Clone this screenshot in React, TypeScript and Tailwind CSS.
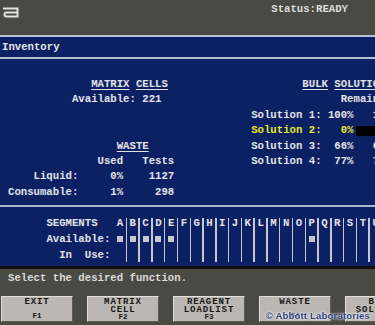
import React from "react";

const U = ({ children }: { children: React.ReactNode }) => (
  <span className="underline decoration-1 underline-offset-[2px]">{children}</span>
);

const letters = "ABCDEFGHIJKLMNOPQRSTU".split("");
const avail = new Set(["A", "B", "C", "D", "E", "P"]);

const buttons: { lines: string[]; key: string }[] = [
  { lines: ["EXIT"], key: "F1" },
  { lines: ["MATRIX", "CELL"], key: "F2" },
  { lines: ["REAGENT", "LOADLIST"], key: "F3" },
  { lines: ["WASTE"], key: "F4" },
  { lines: ["BULK", "SOLUTION"], key: "F5" },
];

function AbbottLogo() {
  return (
    <svg width="16" height="11" viewBox="0 0 16 11" className="block">
      <path
        d="M0 1.5 H14.5 V9.5 H3.5 Q1.5 9.5 1.5 7.5 Q1.5 5.5 3.5 5.5 H14.5"
        fill="none"
        stroke="#e2e2e2"
        strokeWidth="2"
      />
    </svg>
  );
}

export default function App() {
  return (
    <div className="w-[375px] h-[325px] overflow-hidden flex flex-col bg-[#4a4a44] font-['Liberation_Mono','DejaVu_Sans_Mono',monospace] font-bold text-[#e4e4e8]">
      {/* top bar */}
      <div className="h-[35px] shrink-0 flex items-start justify-between">
        <div className="pl-[3px] pt-[7px]">
          <AbbottLogo />
        </div>
        <div className="pt-[2px] mr-[27px] text-[10.667px] leading-[14px] text-[#dcdcd8]">Status:READY</div>
      </div>
      <div className="h-[2px] shrink-0 bg-[#b4c0d4]" />
      {/* Inventory band */}
      <div className="h-[20px] shrink-0 bg-[#0b2163] flex items-center pl-[2px] text-[10.667px] leading-[14px]">
        Inventory
      </div>
      <div className="h-[2px] shrink-0 bg-[#b4c0d4]" />
      {/* main */}
      <div className="h-[146px] shrink-0 bg-[#0b2163] flex pt-[18px] text-[10.667px] leading-[15.4px] whitespace-pre">
        <div className="w-[251.2px] shrink-0 pl-[8px]">
          <div>{"             "}<U>MATRIX</U> <U>CELLS</U></div>
          <div>{"          Available: 221"}</div>
          <div>{" "}</div>
          <div>{" "}</div>
          <div>{"                 "}<U>WASTE</U></div>
          <div>{"              Used   Tests"}</div>
          <div>{"    Liquid:     0%    1127"}</div>
          <div>{"Consumable:     1%     298"}</div>
        </div>
        <div className="flex-1 min-w-0">
          <div>{"        "}<U>BULK</U> <U>SOLUTIONS</U></div>
          <div>{"              Remaining"}</div>
          <div>{"Solution 1: 100%   1500"}</div>
          <div className="flex items-center">
            <span className="text-[#e8e82c]">{"Solution 2:   0%"}</span>
            <div className="flex-1 h-[10px] ml-[2px] bg-black" />
          </div>
          <div>{"Solution 3:  66%   660"}</div>
          <div>{"Solution 4:  77%   770"}</div>
        </div>
      </div>
      <div className="h-[2px] shrink-0 bg-[#a8b4cc]" />
      {/* segments */}
      <div className="h-[59px] shrink-0 bg-[#0b2163] pt-[8px] flex text-[10.667px] leading-[16px]">
        <div className="ml-[46.4px] w-[64px] shrink-0 flex flex-col whitespace-pre">
          <div>SEGMENTS</div>
          <div>Available:</div>
          <div className="text-right">{"In  Use:"}</div>
        </div>
        <div className="w-[6.4px] shrink-0" />
        {letters.map((l) => (
          <React.Fragment key={l}>
            <div className="w-[6.4px] shrink-0 flex flex-col items-center">
              <div className="h-[16px]">{l}</div>
              <div className="h-[16px] flex items-center justify-center">
                {avail.has(l) && <div className="w-[6px] h-[6px] bg-[#c8c8cc]" />}
              </div>
            </div>
            <div className="w-[6.4px] shrink-0 flex justify-center">
              <div className="w-[1.5px] h-[44px] mt-[3px] bg-[#c4c8d0]" />
            </div>
          </React.Fragment>
        ))}
      </div>
      <div className="h-[3px] shrink-0 bg-[#111114]" />
      {/* bottom */}
      <div className="relative flex-1">
        <div className="pl-[8px] pt-[1px] leading-[16px] text-[10.667px] text-[#dadad6] whitespace-pre">
          Select the desired function.
        </div>
        <div className="flex gap-[14px] pl-[1px] mt-[10px]">
          {buttons.map((b) => (
            <div
              key={b.key}
              className="w-[72px] h-[26px] shrink-0 flex flex-col items-center bg-[#bbb7b2] border border-t-[#e2dfdb] border-l-[#e2dfdb] border-b-[#5e5c58] border-r-[#5e5c58] text-[#161616]"
            >
              <div className="pt-[1px] flex flex-col items-center text-[9px] leading-[8px] tracking-[0.9px]">
                {b.lines.map((t) => (
                  <div key={t}>{t}</div>
                ))}
              </div>
              <div className="mt-auto text-[7.5px] leading-[7px] pb-[1px]">{b.key}</div>
            </div>
          ))}
        </div>
        <div className="absolute right-[5px] bottom-[4px] font-['Liberation_Sans',Arial,sans-serif] font-bold text-[9.5px] leading-[10px] tracking-[0.2px] text-[#2d3f7c] [text-shadow:0_0_2px_#fff,0_0_3px_#fff]">
          © Abbott Laboratories
        </div>
      </div>
    </div>
  );
}
